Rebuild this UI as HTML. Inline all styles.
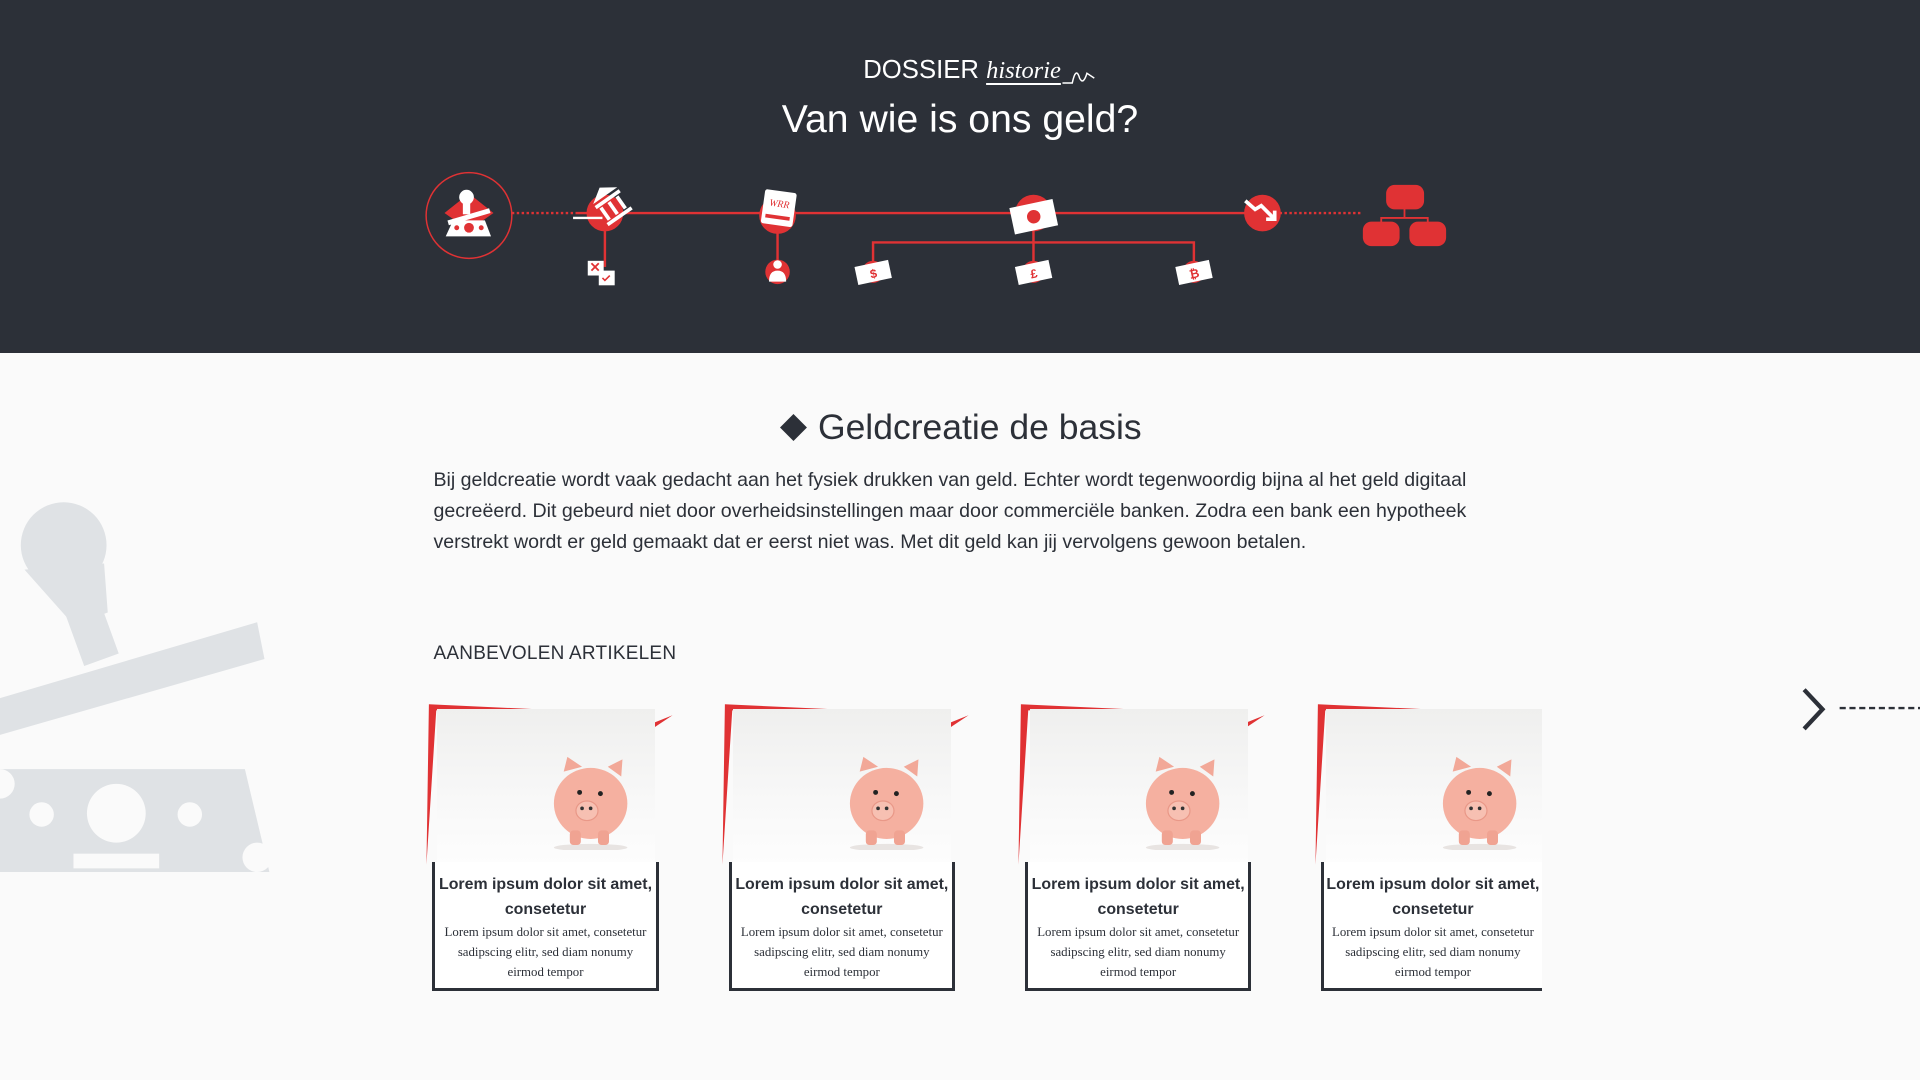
<!DOCTYPE html>
<html><head><meta charset="utf-8"><style>
*{margin:0;padding:0;box-sizing:border-box}
html,body{width:1920px;height:1080px;overflow:hidden;background:#fafafa}
#w{zoom:1.22449;width:1568px;height:882px;position:relative;font-family:"Liberation Sans",sans-serif;background:#fafafa;overflow:hidden}
#hd{position:absolute;left:0;top:0;width:1568px;height:288px;background:#2c3038}
.t{position:absolute;white-space:nowrap}
.card{position:absolute;top:574px;width:190px;height:236px}
.card .img{position:absolute;left:4px;top:5px;width:178px;height:127px;background:linear-gradient(#efefee,#f8f8f8 60%,#fdfdfd)}
.card .box{position:absolute;left:0;top:130px;width:185px;height:105px;border:3px solid #2c3038;border-top:none;background:#fff;text-align:center;color:#2c3038}
.box h4{font:bold 13px/20px "Liberation Sans",sans-serif;margin-top:9px}
.box p{font:10.5px/16.5px "Liberation Serif",serif;margin-top:0}
</style></head><body><div id="w">
<div id="hd"></div>
<div class="t" style="left:705px;top:46px;color:#fff;font-size:21px;">DOSSIER <span style="font-family:'Liberation Serif',serif;font-style:italic;text-decoration:underline;text-underline-offset:4px;font-size:20px">historie</span></div>
<svg style="position:absolute;left:866px;top:50px" width="32" height="20"><path d="M2 18 L10 18 Q13 4 16 14 Q19 20 22 10 L28 14" stroke="#fff" fill="none" stroke-width="1.2"/></svg>
<div class="t" style="left:0;width:1568px;text-align:center;top:80px;color:#fff;font-size:32px;">Van wie is ons geld?</div>

<svg style="position:absolute;left:0;top:0" width="1568" height="288">
<g stroke="#e03234" stroke-width="2" fill="none">
<line x1="418" y1="174" x2="470" y2="174" stroke-dasharray="2 2"/>
<line x1="470" y1="174" x2="1040" y2="174"/>
<line x1="1045" y1="174" x2="1112" y2="174" stroke-dasharray="2 2"/>
<line x1="494" y1="174" x2="494" y2="218"/>
<line x1="635" y1="174" x2="635" y2="215"/>
<polyline points="844,174 844,198"/>
<polyline points="713,214 713,198 975,198 975,214"/>
<line x1="844" y1="198" x2="844" y2="214"/>
<polyline points="1128,183 1128,178 1166,178 1166,183" stroke-width="1.5"/>
<line x1="1147" y1="170" x2="1147" y2="178" stroke-width="1.5"/>
</g>
<circle cx="383" cy="176" r="35" stroke="#e03234" stroke-width="1.2" fill="none"/>
<polygon points="383,158 403,174 383,188 363,174" fill="#e03234"/>
<circle cx="381" cy="161" r="6" fill="#fff"/><rect x="378" y="161" width="6" height="14" fill="#fff"/>
<line x1="366" y1="182" x2="400" y2="172" stroke="#fff" stroke-width="4"/>
<polygon points="370,180 396,180 401,193 364,193" fill="#fff"/>
<circle cx="383" cy="186" r="4" fill="#e03234"/><circle cx="373" cy="186" r="2" fill="#e03234"/><circle cx="393" cy="186" r="2" fill="#e03234"/>
<circle cx="494" cy="174" r="15" fill="#e03234"/>
<g transform="rotate(-35 500 168)"><polygon points="488,158 512,158 500,150" fill="#fff"/><rect x="488" y="160" width="24" height="3" fill="#fff"/><rect x="490" y="164" width="3" height="12" fill="#fff"/><rect x="498" y="164" width="3" height="12" fill="#fff"/><rect x="506" y="164" width="3" height="12" fill="#fff"/><rect x="488" y="177" width="24" height="3" fill="#fff"/></g>
<line x1="468" y1="178" x2="492" y2="178" stroke="#fff" stroke-width="2"/>
<rect x="480" y="213" width="13" height="12" fill="#fff"/><path d="M483 215 l6 6 M489 215 l-6 6" stroke="#e03234" stroke-width="1.5"/><rect x="489" y="221" width="13" height="12" fill="#fff"/><path d="M492 227 l2 2 l4 -4" stroke="#e03234" fill="none" stroke-width="1.3"/>
<circle cx="635" cy="176" r="15" fill="#e03234"/>
<g transform="rotate(8 636 170)"><rect x="623" y="156" width="26" height="28" rx="2" fill="#fff"/><text x="636" y="169" font-family="Liberation Serif" font-style="italic" font-size="8" fill="#e03234" text-anchor="middle">WRR</text><rect x="626" y="176" width="20" height="3" fill="#e03234"/></g>
<circle cx="635" cy="222" r="10" fill="#e03234"/><circle cx="635" cy="216" r="3.5" fill="#fff"/><path d="M628 230 q0 -9 7 -9 q7 0 7 9z" fill="#fff"/>
<circle cx="844" cy="174" r="15" fill="#e03234"/>
<g transform="rotate(-12 844 176)"><rect x="826" y="166" width="36" height="22" fill="#fff"/><circle cx="844" cy="177" r="5.5" fill="#e03234"/></g>
<g transform="rotate(-12 713 222)"><circle cx="713" cy="222" r="9" fill="#e03234"/><rect x="699" y="215" width="28" height="15" fill="#fff"/><text x="713" y="227" font-size="10" font-weight="bold" fill="#e03234" text-anchor="middle">$</text></g>
<g transform="rotate(-12 844 222)"><circle cx="844" cy="222" r="9" fill="#e03234"/><rect x="830" y="215" width="28" height="15" fill="#fff"/><text x="844" y="227" font-size="10" font-weight="bold" fill="#e03234" text-anchor="middle">£</text></g>
<g transform="rotate(-12 975 222)"><circle cx="975" cy="222" r="9" fill="#e03234"/><rect x="961" y="215" width="28" height="15" fill="#fff"/><text x="975" y="227" font-size="10" font-weight="bold" fill="#e03234" text-anchor="middle">₿</text></g>
<circle cx="1031" cy="174" r="15" fill="#e03234"/>
<polyline points="1017,164 1025,171 1030,168 1040,178" stroke="#fff" stroke-width="3" fill="none"/><polyline points="1034,179 1041,179 1041,172" stroke="#fff" stroke-width="3" fill="none"/>
<rect x="1132" y="151" width="31" height="20" rx="7" fill="#e03234"/>
<rect x="1113" y="181" width="30" height="20" rx="7" fill="#e03234"/>
<rect x="1151" y="181" width="30" height="20" rx="7" fill="#e03234"/>
</svg>

<svg style="position:absolute;left:0;top:400px" width="230" height="320">
<g fill="#dfe2e5">
<circle cx="52" cy="45" r="35"/>
<polygon points="20,65 85,60 88,100 60,110"/>
<rect x="60" y="95" width="30" height="45" transform="rotate(-20 75 117)"/>
<polygon points="0,170 210,108 216,138 0,200"/>
<polygon points="0,228 200,228 220,312 0,312"/>
</g>
<g fill="#fafafa"><circle cx="95" cy="264" r="24"/><circle cx="34" cy="265" r="10"/><circle cx="155" cy="265" r="10"/><rect x="60" y="297" width="70" height="12"/><circle cx="0" cy="240" r="12"/><circle cx="210" cy="300" r="12"/></g>
</svg>

<svg style="position:absolute;left:637px;top:338px" width="22" height="22"><polygon points="11,0 22,11 11,22 0,11" fill="#2c3038"/></svg>
<div class="t" style="left:668px;top:332px;color:#2c3038;font-size:29px;">Geldcreatie de basis</div>
<div style="position:absolute;left:354px;top:380px;width:870px;color:#2c3038;font-size:16px;line-height:25.3px;">Bij geldcreatie wordt vaak gedacht aan het fysiek drukken van geld. Echter wordt tegenwoordig bijna al het geld digitaal gecreëerd. Dit gebeurd niet door overheidsinstellingen maar door commerciële banken. Zodra een bank een hypotheek verstrekt wordt er geld gemaakt dat er eerst niet was. Met dit geld kan jij vervolgens gewoon betalen.</div>
<div class="t" style="left:354px;top:525px;color:#2c3038;font-size:15.5px;letter-spacing:0.2px">AANBEVOLEN ARTIKELEN</div>

<svg style="position:absolute;left:1468px;top:560px" width="100" height="40"><polyline points="5,3 20,19 5,35" stroke="#2c3038" stroke-width="3.5" fill="none"/><line x1="34" y1="18" x2="100" y2="18" stroke="#2c3038" stroke-width="2" stroke-dasharray="5 3"/></svg>

<div class="card" style="left:353px">
<svg style="position:absolute;left:-7px;top:0" width="205" height="135"><polygon points="4,1 90,5 10,6 2,132" fill="#e03234"/><polygon points="188,16 203,10 188,20" fill="#e03234"/></svg>
<div class="img"></div>
<svg style="position:absolute;left:95px;top:40px" width="70" height="80"><ellipse cx="34" cy="78" rx="30" ry="3" fill="#e8e4e2"/><path d="M12 16 l3 -12 l12 8z M48 12 l12 -6 l-1 14z" fill="#f2a898"/><ellipse cx="34" cy="42" rx="30" ry="29" fill="#f5b0a0"/><rect x="17" y="64" width="9" height="12" rx="3" fill="#f0a392"/><rect x="40" y="64" width="9" height="12" rx="3" fill="#f0a392"/><ellipse cx="31" cy="48" rx="9" ry="8" fill="#f7c0b2" stroke="#e99888"/><circle cx="27" cy="46" r="1.5" fill="#333"/><circle cx="34" cy="46" r="1.5" fill="#333"/><circle cx="25" cy="33" r="2" fill="#222"/><circle cx="42" cy="34" r="2" fill="#222"/></svg>
<div class="box"><h4>Lorem ipsum dolor sit amet,<br>consetetur</h4><p>Lorem ipsum dolor sit amet, consetetur<br>sadipscing elitr, sed diam nonumy<br>eirmod tempor</p></div></div>

<div class="card" style="left:595px">
<svg style="position:absolute;left:-7px;top:0" width="205" height="135"><polygon points="4,1 90,5 10,6 2,132" fill="#e03234"/><polygon points="188,16 203,10 188,20" fill="#e03234"/></svg>
<div class="img"></div>
<svg style="position:absolute;left:95px;top:40px" width="70" height="80"><ellipse cx="34" cy="78" rx="30" ry="3" fill="#e8e4e2"/><path d="M12 16 l3 -12 l12 8z M48 12 l12 -6 l-1 14z" fill="#f2a898"/><ellipse cx="34" cy="42" rx="30" ry="29" fill="#f5b0a0"/><rect x="17" y="64" width="9" height="12" rx="3" fill="#f0a392"/><rect x="40" y="64" width="9" height="12" rx="3" fill="#f0a392"/><ellipse cx="31" cy="48" rx="9" ry="8" fill="#f7c0b2" stroke="#e99888"/><circle cx="27" cy="46" r="1.5" fill="#333"/><circle cx="34" cy="46" r="1.5" fill="#333"/><circle cx="25" cy="33" r="2" fill="#222"/><circle cx="42" cy="34" r="2" fill="#222"/></svg>
<div class="box"><h4>Lorem ipsum dolor sit amet,<br>consetetur</h4><p>Lorem ipsum dolor sit amet, consetetur<br>sadipscing elitr, sed diam nonumy<br>eirmod tempor</p></div></div>

<div class="card" style="left:837px">
<svg style="position:absolute;left:-7px;top:0" width="205" height="135"><polygon points="4,1 90,5 10,6 2,132" fill="#e03234"/><polygon points="188,16 203,10 188,20" fill="#e03234"/></svg>
<div class="img"></div>
<svg style="position:absolute;left:95px;top:40px" width="70" height="80"><ellipse cx="34" cy="78" rx="30" ry="3" fill="#e8e4e2"/><path d="M12 16 l3 -12 l12 8z M48 12 l12 -6 l-1 14z" fill="#f2a898"/><ellipse cx="34" cy="42" rx="30" ry="29" fill="#f5b0a0"/><rect x="17" y="64" width="9" height="12" rx="3" fill="#f0a392"/><rect x="40" y="64" width="9" height="12" rx="3" fill="#f0a392"/><ellipse cx="31" cy="48" rx="9" ry="8" fill="#f7c0b2" stroke="#e99888"/><circle cx="27" cy="46" r="1.5" fill="#333"/><circle cx="34" cy="46" r="1.5" fill="#333"/><circle cx="25" cy="33" r="2" fill="#222"/><circle cx="42" cy="34" r="2" fill="#222"/></svg>
<div class="box"><h4>Lorem ipsum dolor sit amet,<br>consetetur</h4><p>Lorem ipsum dolor sit amet, consetetur<br>sadipscing elitr, sed diam nonumy<br>eirmod tempor</p></div></div>

<div class="card" style="left:1079px">
<svg style="position:absolute;left:-7px;top:0" width="205" height="135"><polygon points="4,1 90,5 10,6 2,132" fill="#e03234"/></svg>
<div class="img" style="width:176px"></div>
<svg style="position:absolute;left:95px;top:40px" width="70" height="80"><ellipse cx="34" cy="78" rx="30" ry="3" fill="#e8e4e2"/><path d="M12 16 l3 -12 l12 8z M48 12 l12 -6 l-1 14z" fill="#f2a898"/><ellipse cx="34" cy="42" rx="30" ry="29" fill="#f5b0a0"/><rect x="17" y="64" width="9" height="12" rx="3" fill="#f0a392"/><rect x="40" y="64" width="9" height="12" rx="3" fill="#f0a392"/><ellipse cx="31" cy="48" rx="9" ry="8" fill="#f7c0b2" stroke="#e99888"/><circle cx="27" cy="46" r="1.5" fill="#333"/><circle cx="34" cy="46" r="1.5" fill="#333"/><circle cx="25" cy="33" r="2" fill="#222"/><circle cx="42" cy="34" r="2" fill="#222"/></svg>
<div class="box" style="width:180px;border-right:none"><h4>Lorem ipsum dolor sit amet,<br>consetetur</h4><p>Lorem ipsum dolor sit amet, consetetur<br>sadipscing elitr, sed diam nonumy<br>eirmod tempor</p></div></div>
</div></body></html>
